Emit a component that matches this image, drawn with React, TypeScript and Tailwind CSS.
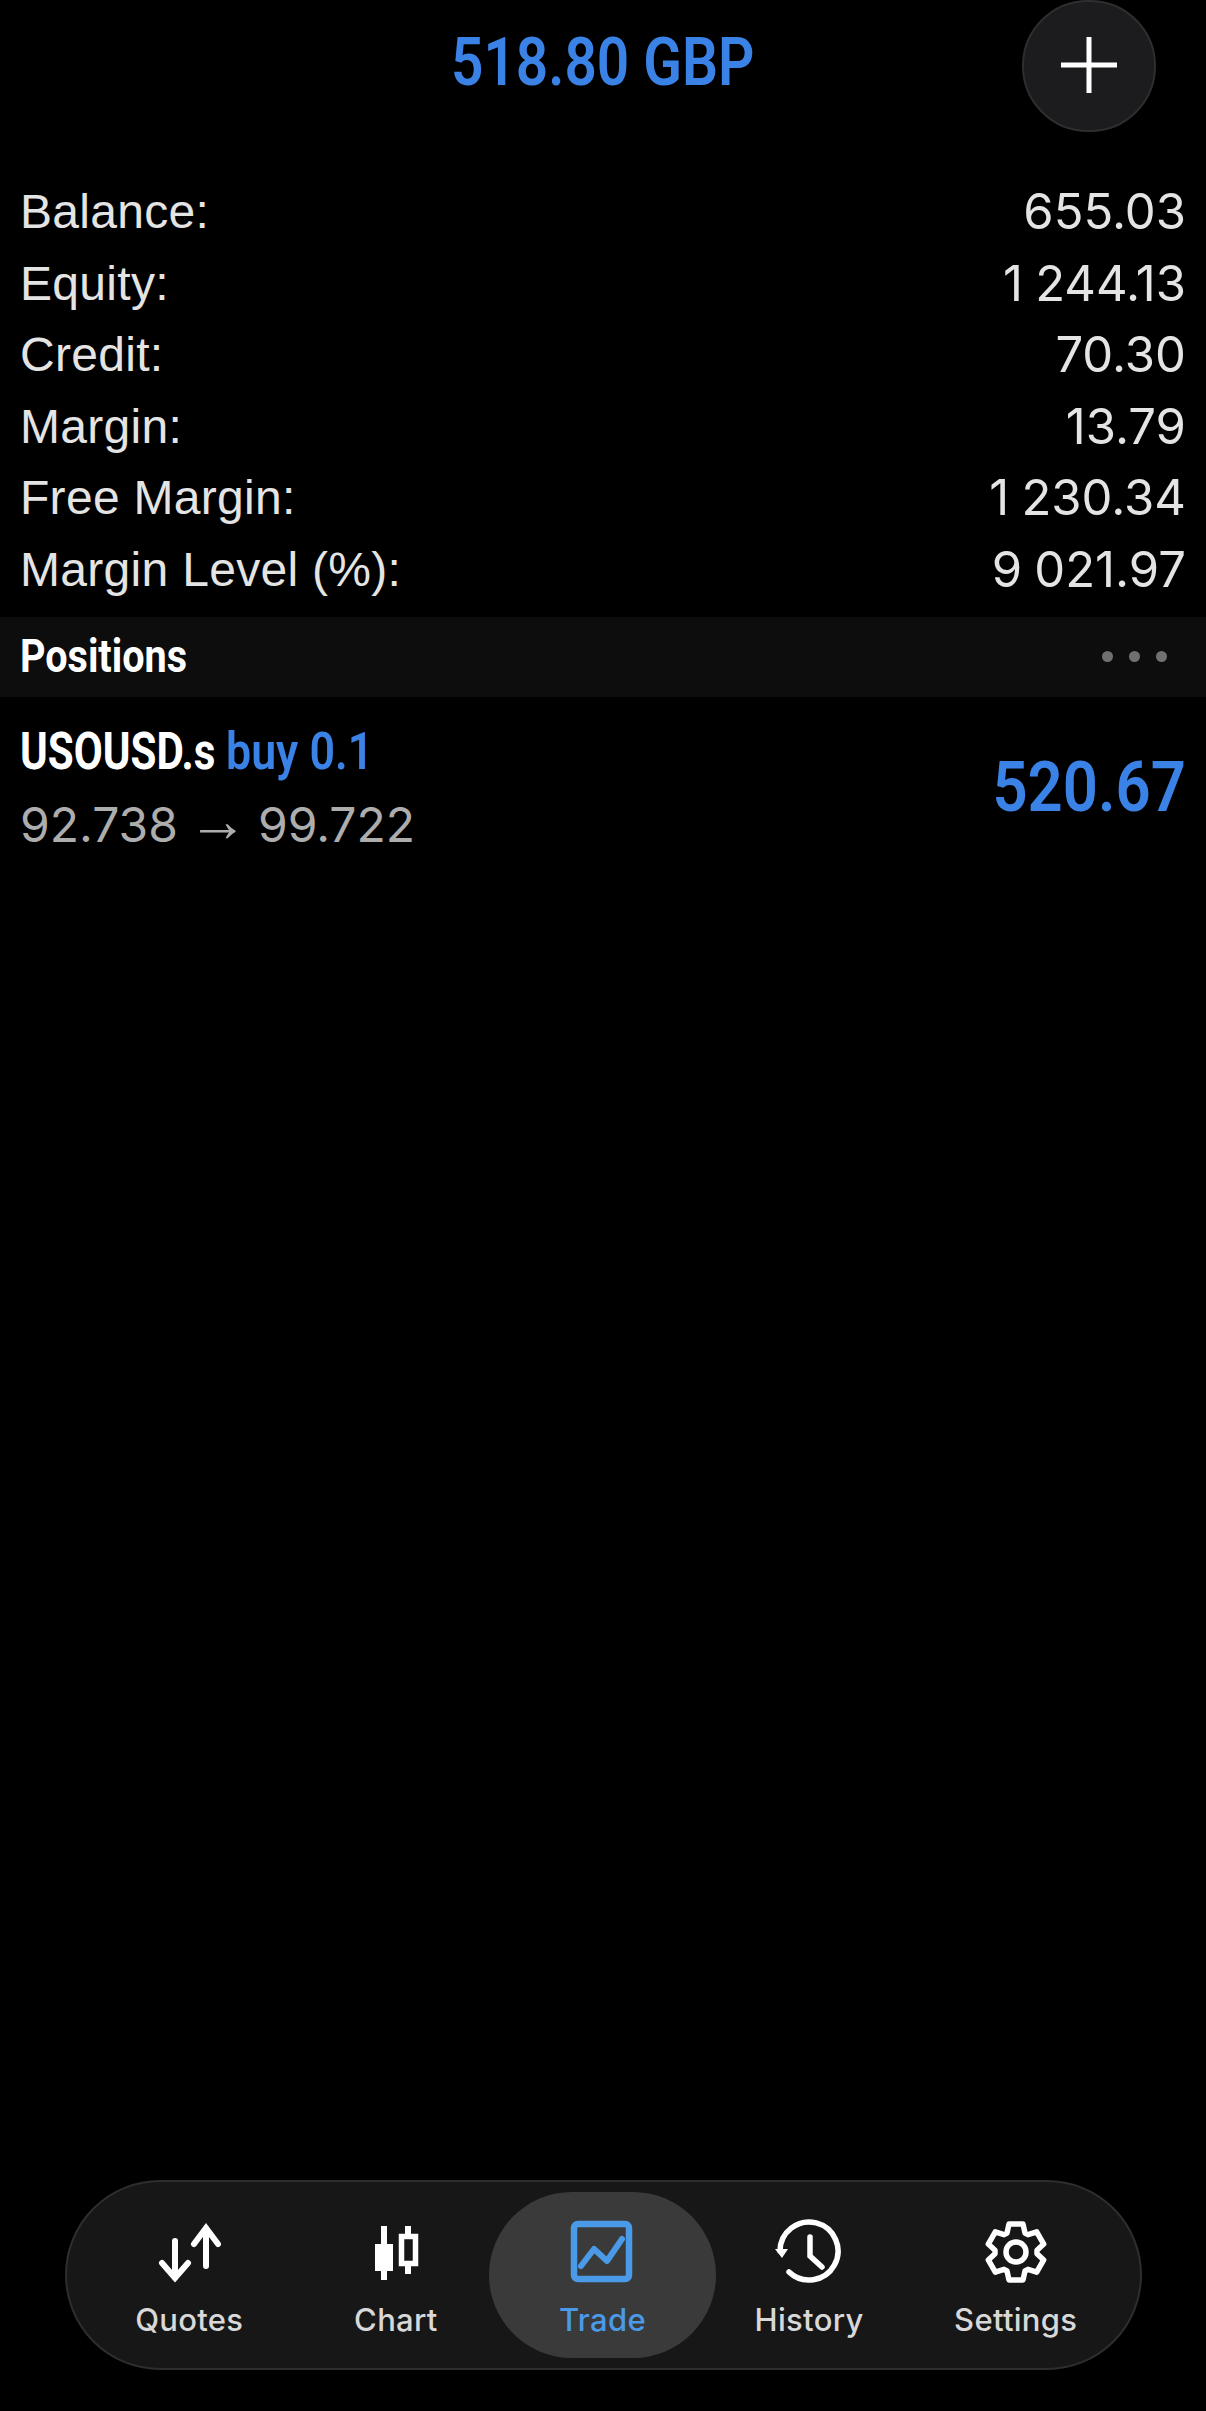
const ACCOUNT_ROWS = [
  { label: "Balance:", value: "655.03" },
  { label: "Equity:", value: "1\u2005244.13" },
  { label: "Credit:", value: "70.30" },
  { label: "Margin:", value: "13.79" },
  { label: "Free Margin:", value: "1\u2005230.34" },
  { label: "Margin Level (%):", value: "9\u2005021.97" },
];

function QuotesIcon() {
  return (
    <svg viewBox="0 0 70 70" className="h-[70px] w-[70px]" fill="none" stroke="currentColor" strokeWidth="6" strokeLinecap="round">
      <path d="M21 23v37M8 45l13 15 13-15" />
      <path d="M52 10v38M40 26l12-16 12 16" />
    </svg>
  );
}

function ChartIcon() {
  return (
    <svg viewBox="2 0 70 70" className="h-[70px] w-[70px]" stroke="currentColor" strokeWidth="6" fill="none">
      <path d="M25 8v54M49 8v48" />
      <rect x="16" y="26" width="18" height="27" fill="currentColor" stroke="none" />
      <rect x="42.5" y="18.5" width="14" height="27" fill="#171717" strokeWidth="5.5" />
    </svg>
  );
}

function TradeIcon() {
  return (
    <svg viewBox="0 0 70 70" className="h-[70px] w-[70px]" stroke="currentColor" fill="none" strokeWidth="6.5">
      <rect x="7" y="6" width="55" height="55" rx="4" />
      <path d="M14 48l13-17 13 12 15-22" strokeWidth="6" strokeLinecap="round" strokeLinejoin="round" />
    </svg>
  );
}

function HistoryIcon() {
  return (
    <svg viewBox="0 0 70 70" className="h-[70px] w-[70px]" stroke="currentColor" fill="none" strokeWidth="5.5" strokeLinecap="round">
      <path d="M6 33A29 29 0 1 1 15 54" />
      <path d="M36 19v19l12 11" />
      <polygon points="1,31 14,31 8,40" fill="currentColor" stroke="none" />
    </svg>
  );
}

function SettingsIcon() {
  const outer = 28;
  const base = 19;
  const pts: string[] = [];
  for (let k = 0; k < 6; k++) {
    const a = (k * Math.PI) / 3;
    const local = [
      [base, -9],
      [outer, -7],
      [outer, 7],
      [base, 9],
    ];
    for (const [u, v] of local) {
      pts.push(`${(35 + u * Math.sin(a) + v * Math.cos(a)).toFixed(1)},${(34 - u * Math.cos(a) + v * Math.sin(a)).toFixed(1)}`);
    }
  }
  return (
    <svg viewBox="0 0 70 70" className="h-[70px] w-[70px]" stroke="currentColor" fill="none" strokeWidth="5.5" strokeLinejoin="round">
      <circle cx="35" cy="34" r="10" />
      <polygon points={pts.join(" ")} />
    </svg>
  );
}

const NAV_ITEMS = [
  { label: "Quotes", icon: <QuotesIcon /> },
  { label: "Chart", icon: <ChartIcon /> },
  { label: "Trade", icon: <TradeIcon />, active: true },
  { label: "History", icon: <HistoryIcon /> },
  { label: "Settings", icon: <SettingsIcon /> },
];

export default function App() {
  return (
    <div className="flex h-[2411px] flex-col bg-black font-['Liberation_Sans',sans-serif] text-[#e4e4e4]">
      {/* Header */}
      <header className="grid h-[132px] grid-cols-[1fr_304px_1fr] items-center">
        <div />
        <div className="-mt-[6px] origin-left scale-x-[0.86] whitespace-nowrap font-['Roboto',sans-serif] text-[66px] font-semibold leading-none text-[#3b82e6]">
          518.80 GBP
        </div>
        <div className="flex justify-end pr-[50px]">
          <button className="flex h-[132px] w-[134px] items-center justify-center rounded-full border-2 border-[#2e2e2e] bg-[#1c1c1e] text-white">
            <svg viewBox="0 0 56 56" className="-mt-[3px] h-[56px] w-[56px]" stroke="currentColor" strokeWidth="5">
              <path d="M28 0v56M0 28h56" />
            </svg>
          </button>
        </div>
      </header>

      {/* Account */}
      <section className="mt-[44px] flex flex-col px-[20px] text-[48px] leading-[71.6px]">
        {ACCOUNT_ROWS.map((row) => (
          <div key={row.label} className="flex justify-between">
            <span className="tracking-[0.3px]">{row.label}</span>
            <span className="font-['Inter',sans-serif] text-[49px]">{row.value}</span>
          </div>
        ))}
      </section>

      {/* Positions */}
      <div className="mt-[11px] flex h-[80px] items-center justify-between bg-[#0d0d0d] pl-[20px] pr-[39px]">
        <span className="origin-left scale-x-[0.86] whitespace-nowrap font-['Roboto',sans-serif] text-[46px] font-bold text-white">
          Positions
        </span>
        <div className="flex gap-[16px]">
          <span className="h-[11px] w-[11px] rounded-full bg-[#707070]" />
          <span className="h-[11px] w-[11px] rounded-full bg-[#707070]" />
          <span className="h-[11px] w-[11px] rounded-full bg-[#707070]" />
        </div>
      </div>

      <div className="flex items-center justify-between px-[20px] pt-[26px]">
        <div className="flex flex-col">
          <div className="flex h-[58px] items-center">
            <span className="w-[206px] origin-left scale-x-[0.81] whitespace-nowrap font-['Roboto',sans-serif] text-[52px] font-bold text-white">
              USOUSD.s
            </span>
            <span className="origin-left scale-x-[0.86] whitespace-nowrap font-['Roboto',sans-serif] text-[52px] font-semibold text-[#3b82e6]">
              buy 0.1
            </span>
          </div>
          <div className="mt-[14px] flex items-center gap-[10px] font-['Inter',sans-serif] text-[48px] leading-[60px] text-[#adadad]">
            <span>92.738</span>
            <span className="-mt-[8px] font-['Liberation_Sans',sans-serif] text-[60px] leading-[60px]">→</span>
            <span>99.722</span>
          </div>
        </div>
        <span className="-mt-[4px] origin-right scale-x-[0.88] whitespace-nowrap font-['Roboto',sans-serif] text-[70px] font-semibold leading-none text-[#3b82e6]">
          520.67
        </span>
      </div>

      <div className="flex-1" />

      {/* Bottom nav */}
      <nav className="mb-[41px] ml-[65px] mr-[64px] grid h-[190px] grid-cols-5 items-center rounded-full border-2 border-[#2e2e2e] bg-[#171717] pl-[19px] pr-[21px]">
        {NAV_ITEMS.map((item) => (
          <div
            key={item.label}
            className={
              item.active
                ? "-mx-[10px] flex h-[166px] flex-col items-center justify-center rounded-full bg-[#3a3a3a] pt-[6px] text-[#4a9ae8]"
                : "flex h-[166px] flex-col items-center justify-center pt-[6px] text-white"
            }
          >
            <div className="flex h-[70px] items-center justify-center">{item.icon}</div>
            <span className={item.active ? "mt-[14px] font-['Inter',sans-serif] text-[31px] font-medium leading-[36px] tracking-[0.3px]" : "mt-[14px] font-['Inter',sans-serif] text-[31px] font-medium leading-[36px] tracking-[0.3px] text-[#d8d8d8]"}>
              {item.label}
            </span>
          </div>
        ))}
      </nav>
    </div>
  );
}
